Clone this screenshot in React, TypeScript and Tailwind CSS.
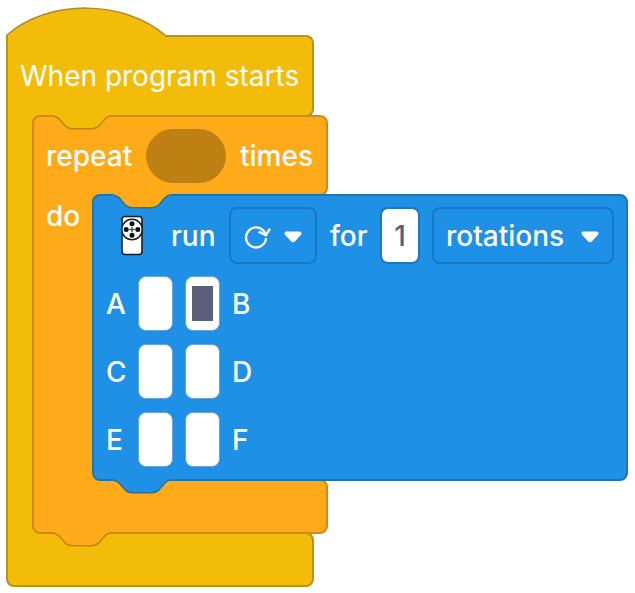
import type { ReactNode } from "react";

const NOTCH = "c3 0 5 2 7 3 l6 7 c2 2 4 3 7 3 h20 c3 0 5 -1 7 -3 l6 -7 c2 -2 4 -3 7 -3";

function Notch({ fill, stroke, className }: { fill: string; stroke: string; className: string }) {
  return (
    <svg className={`pointer-events-none absolute left-5 z-20 ${className}`} width="60" height="15" viewBox="0 0 60 15" aria-hidden="true">
      <path d={`M0 0 V0.5 ${NOTCH} V0 Z`} fill={fill} />
      <path d="M0 0 H60 V1.4 H0 Z" fill={fill} />
      <path d={`M0 0.75 ${NOTCH}`} fill="none" stroke={stroke} strokeWidth="1.6" />
    </svg>
  );
}

function Caret() {
  return (
    <svg className="pointer-events-none absolute right-[15px] top-6" width="18" height="12" viewBox="0 0 18 12" aria-hidden="true">
      <path d="M2 0.5 H16 Q18.6 1.4 16.8 4 L10.8 10.4 Q9 12 7.2 10.4 L1.2 4 Q-0.6 1.4 2 0.5 Z" fill="#fff" />
    </svg>
  );
}

function MotorIcon() {
  return (
    <svg width="24" height="42" viewBox="0 0 24 42" role="img" aria-label="motor">
      <rect x="2" y="1.5" width="20" height="38" rx="3" fill="#fff" stroke="#16202a" strokeWidth="1.6" />
      <circle cx="12" cy="14.5" r="10.3" fill="#fff" stroke="#16202a" strokeWidth="1.6" />
      <circle cx="12" cy="8.7" r="2.5" fill="#111" />
      <circle cx="12" cy="20.3" r="2.5" fill="#111" />
      <circle cx="6.2" cy="14.5" r="2.5" fill="#111" />
      <circle cx="17.8" cy="14.5" r="2.5" fill="#111" />
      <path d="M12 11.8 V17.2 M9.3 14.5 H14.7" stroke="#2b6a40" strokeWidth="1.4" />
    </svg>
  );
}

function ClockwiseIcon() {
  return (
    <svg className="pointer-events-none absolute left-[15px] top-4" width="28" height="26" viewBox="0 0 28 26" fill="none" stroke="#fff" strokeWidth="2.3" aria-hidden="true">
      <path d="M21.4 11 A10 10 0 1 0 22 15" />
      <path d="M14.6 8.6 L22 12.2 L26 5.6" />
    </svg>
  );
}

function Port({ name, on = false }: { name: string; on?: boolean }) {
  return (
    <input
      id={`port-${name}`}
      type="checkbox"
      defaultChecked={on}
      className="flex h-[55px] w-[35px] shrink-0 appearance-none items-center justify-center rounded-lg border border-[#6ba2dc] bg-white checked:before:h-[35px] checked:before:w-[21px] checked:before:bg-[#5a5f7a] checked:before:content-['']"
    />
  );
}

function PortRow({ left, right, active }: { left: string; right: string; active?: string }) {
  return (
    <div className="flex items-center gap-3">
      <label htmlFor={`port-${left}`} className="w-5">{left}</label>
      <Port name={left} on={active === left} />
      <Port name={right} on={active === right} />
      <label htmlFor={`port-${right}`} className="w-5">{right}</label>
    </div>
  );
}

function RunBlock() {
  return (
    <section className="relative z-10 -ml-4 w-max rounded-lg border-2 border-[#2374ac] bg-[#1e90e6] px-3 pb-3 pt-[11px]">
      <Notch fill="#ffab19" stroke="#2d719a" className="-top-0.5 -ml-0.5" />
      <div className="flex items-center gap-3.5">
        <div className="flex w-[51px] justify-center">
          <MotorIcon />
        </div>
        <span className="w-11">run</span>
        <div className="relative h-[57px] w-[88px]">
          <select aria-label="direction" className="h-full w-full appearance-none rounded-lg border-2 border-[#1779c6] bg-transparent">
            <option value="clockwise" aria-label="clockwise"></option>
          </select>
          <ClockwiseIcon />
          <Caret />
        </div>
        <label htmlFor="amount" className="-ml-px w-9">for</label>
        <input id="amount" defaultValue="1" className="h-[57px] w-10 rounded-lg border-2 border-[#2076b8] bg-white text-center text-[#575e75]" />
        <div className="relative -ml-0.5 h-[57px] w-[182px]">
          <select aria-label="unit" className="h-full w-full appearance-none rounded-lg border-2 border-[#1779c6] bg-transparent pl-3 text-white">
            <option>rotations</option>
          </select>
          <Caret />
        </div>
      </div>
      <div className="mt-3 flex flex-col gap-[13px]">
        <PortRow left="A" right="B" active="B" />
        <PortRow left="C" right="D" />
        <PortRow left="E" right="F" />
      </div>
      <Notch fill="#1e90e6" stroke="#2d719a" className="top-full -ml-0.5" />
    </section>
  );
}

function RepeatBlock({ children }: { children: ReactNode }) {
  return (
    <section className="relative z-10 -ml-4 w-max">
      <Notch fill="#f3bc09" stroke="#c2860f" className="top-0" />
      <header className="flex h-[81px] w-max items-center gap-3.5 rounded-r-lg rounded-tl-lg border-2 border-[#cf8b13] bg-[#ffab19] px-3">
        <label htmlFor="count" className="w-[86px]">repeat</label>
        <input id="count" className="h-[54px] w-20 rounded-full bg-[#bf8013] px-4 text-center" />
        <span className="w-[74px]">times</span>
      </header>
      <div className="relative z-10 -my-0.5 flex">
        <div className="w-[76px] border-l-2 border-[#cf8b13] bg-[#ffab19] pl-3 pt-0.5">do</div>
        {children}
      </div>
      <footer className="h-[55px] w-[296px] rounded-r-lg rounded-bl-lg border-2 border-[#cf8b13] bg-[#ffab19]" />
      <Notch fill="#ffab19" stroke="#c2860f" className="top-full -mt-0.5" />
    </section>
  );
}

function StartBlock({ children }: { children: ReactNode }) {
  return (
    <section className="w-max">
      <svg className="relative z-10 -mb-0.5 block" width="162" height="30" viewBox="0 0 162 30" aria-hidden="true">
        <path d="M1 28 C42 -8 118 -8 160 28.5 V30 H1 Z" fill="#f3bc09" />
        <path d="M1 30 V28 C42 -8 118 -8 160 29" fill="none" stroke="#aa8e2a" strokeWidth="1.5" />
      </svg>
      <header className="flex h-[82px] w-[308px] items-center rounded-r-lg border-2 border-[#b8921f] bg-[#f3bc09] px-3">
        <h1 className="whitespace-nowrap font-normal">When program starts</h1>
      </header>
      <div className="relative z-10 -my-0.5 flex">
        <div className="w-[42px] border-l-2 border-[#b8921f] bg-[#f3bc09]" />
        {children}
      </div>
      <footer className="h-[55px] w-[308px] rounded-r-lg rounded-bl-lg border-2 border-[#b8921f] bg-[#f3bc09]" />
    </section>
  );
}

export default function App() {
  return (
    <main className="bg-white pl-1.5 pt-[7px] font-['Inter',sans-serif] text-[28px] font-[450] leading-10 text-white">
      <StartBlock>
        <RepeatBlock>
          <RunBlock />
        </RepeatBlock>
      </StartBlock>
    </main>
  );
}
